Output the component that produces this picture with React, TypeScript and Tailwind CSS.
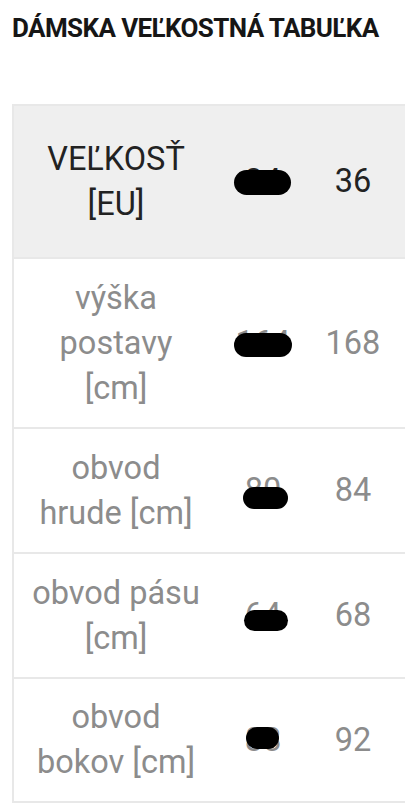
import * as React from 'react';

interface Row {
  label: string;
  hidden: string;
  value: string;
  height: string;
  /** Where the marker stroke sits over the hidden column. */
  blot: string;
}

const rows: Row[] = [
  {
    label: 'výška postavy [cm]',
    hidden: '164',
    value: '168',
    height: 'h-[170px]',
    blot: 'left-[16px] top-[74px] h-[24px] w-[58px]',
  },
  {
    label: 'obvod hrude [cm]',
    hidden: '80',
    value: '84',
    height: 'h-[125px]',
    blot: 'left-[25px] top-[58px] h-[22px] w-[45px]',
  },
  {
    label: 'obvod pásu [cm]',
    hidden: '64',
    value: '68',
    height: 'h-[125px]',
    blot: 'left-[26px] top-[56px] h-[21px] w-[44px]',
  },
  {
    label: 'obvod bokov [cm]',
    hidden: '88',
    value: '92',
    height: 'h-[124px]',
    blot: 'left-[28px] top-[48px] h-[22px] w-[33px]',
  },
];

function Hidden({ text, blot, dark }: { text: string; blot: string; dark?: boolean }) {
  // Value scribbled over in the source photo: digits underneath, a black marker stroke on top.
  return (
    <div className="relative h-full w-full">
      <div className={`flex h-full items-center justify-center ${dark ? 'text-[#222]' : 'text-[#8c8c8c]'}`}>
        {text}
      </div>
      <div className={`absolute rounded-full bg-black ${blot}`} />
    </div>
  );
}

export default function App() {
  return (
    <div
      className="w-[405px] h-[809px] overflow-hidden bg-white"
      style={{ fontFamily: 'Roboto, "Noto Sans", sans-serif' }}
    >
      <h1 className="whitespace-nowrap pl-[12px] pt-[13px] text-[26px] leading-[30px] font-bold tracking-[-0.6px] text-[#161616]">
        DÁMSKA VEĽKOSTNÁ TABUĽKA
      </h1>

      <div className="mt-[61px] pl-3">
        <table className="w-[430px] table-fixed border-collapse text-[32.5px] leading-[45px]">
          <colgroup>
            <col className="w-[205px]" />
            <col className="w-[90px]" />
            <col className="w-[90px]" />
            <col />
          </colgroup>
          <tbody>
            <tr className="h-[153px] bg-[#efefef] text-[#222]">
              <td className="border-y-2 border-l-2 border-[#e8e8e8] px-[16px] text-center align-middle">
                VEĽKOSŤ [EU]
              </td>
              <td className="h-[153px] border-y-2 border-[#e8e8e8] p-0">
                <Hidden text="34" dark blot="left-[16px] top-[64px] h-[25px] w-[57px]" />
              </td>
              <td className="border-y-2 border-[#e8e8e8] text-center align-middle">36</td>
              <td className="border-y-2 border-[#e8e8e8]" />
            </tr>
            {rows.map((r) => (
              <tr key={r.label} className={`${r.height} text-[#8c8c8c]`}>
                <td className="border-b-2 border-l-2 border-[#e8e8e8] px-[16px] text-center align-middle">
                  {r.label}
                </td>
                <td className={`${r.height} border-b-2 border-[#e8e8e8] p-0`}>
                  <Hidden text={r.hidden} blot={r.blot} />
                </td>
                <td className="border-b-2 border-[#e8e8e8] text-center align-middle">{r.value}</td>
                <td className="border-b-2 border-[#e8e8e8]" />
              </tr>
            ))}
          </tbody>
        </table>
      </div>
    </div>
  );
}
